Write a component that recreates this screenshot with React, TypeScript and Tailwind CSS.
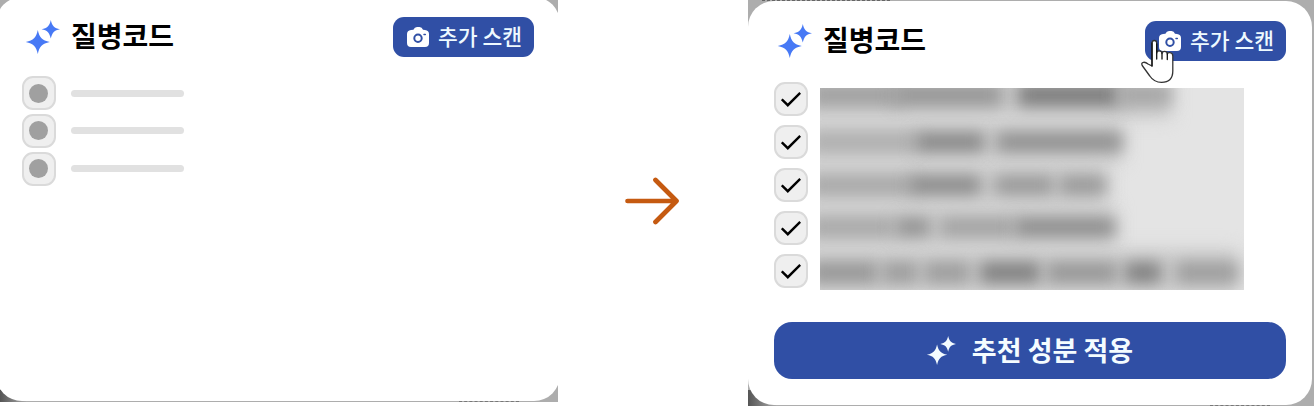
import clsx from 'clsx';

const FONT = 'font-["Noto_Sans_CJK_KR",sans-serif]';

type Smudge = { x: number; w: number; tone: string };

// Blurred text rows: each entry is a word, x and w in pixels
const ROWS: { y: number; h: number; words: Smudge[] }[] = [
  {
    y: -4,
    h: 22,
    words: [
      { x: -10, w: 90, tone: '#a0a0a0' },
      { x: 74, w: 108, tone: '#969696' },
      { x: 198, w: 102, tone: '#7c7c7c' },
      { x: 298, w: 53, tone: '#a6a6a6' },
    ],
  },
  {
    y: 45,
    h: 18,
    words: [
      { x: -10, w: 108, tone: '#adadad' },
      { x: 96, w: 68, tone: '#848484' },
      { x: 177, w: 125, tone: '#8c8c8c' },
    ],
  },
  {
    y: 88,
    h: 18,
    words: [
      { x: -10, w: 104, tone: '#a6a6a6' },
      { x: 90, w: 70, tone: '#888' },
      { x: 175, w: 58, tone: '#969696' },
      { x: 240, w: 46, tone: '#969696' },
    ],
  },
  {
    y: 130,
    h: 18,
    words: [
      { x: -10, w: 84, tone: '#a6a6a6' },
      { x: 76, w: 34, tone: '#909090' },
      { x: 120, w: 74, tone: '#a0a0a0' },
      { x: 195, w: 100, tone: '#8a8a8a' },
    ],
  },
  {
    y: 174,
    h: 21,
    words: [
      { x: -10, w: 68, tone: '#969696' },
      { x: 62, w: 36, tone: '#9c9c9c' },
      { x: 104, w: 46, tone: '#9c9c9c' },
      { x: 160, w: 60, tone: '#808080' },
      { x: 227, w: 70, tone: '#969696' },
      { x: 305, w: 36, tone: '#808080' },
      { x: 356, w: 62, tone: '#9c9c9c' },
    ],
  },
];

function Sparkles({ className }: { className: string }) {
  return (
    <svg viewBox="0 0 34 34" className={className} fill="currentColor">
      <path d="M11.8 10C13.6 17.8 16 20.3 23.8 22C16 23.7 13.6 26.2 11.8 34C10 26.2 7.6 23.7 -0.2 22C7.6 20.3 10 17.8 11.8 10Z" />
      <path d="M24.8 0C26.2 6.2 28.3 8.1 34 9.3C28.3 10.5 26.2 12.4 24.8 18.6C23.4 12.4 21.3 10.5 15.6 9.3C21.3 8.1 23.4 6.2 24.8 0Z" />
    </svg>
  );
}

function Camera() {
  return (
    <svg viewBox="0 0 22 20" className="w-[22px] h-5">
      <path
        fill="#fff"
        d="M6.4 2.8Q7.6 0 10 0H12.5Q15 0 16 2.8L18 3Q22 3.4 22 7V16Q22 20 18 20H4Q0 20 0 16V7Q0 3.4 4 3Z"
      />
      <circle cx="11" cy="11.2" r="3.7" fill="none" stroke="#304fa5" strokeWidth="2" />
      <path d="M17 7.5H18.3" stroke="#304fa5" strokeWidth="1.5" strokeLinecap="round" />
    </svg>
  );
}

function Pointer() {
  return (
    <svg
      viewBox="0 0 34 44"
      className="absolute left-[-4px] top-[18px] w-[34px] h-11"
      fill="#fff"
      stroke="#333"
      strokeWidth="1.3"
      strokeLinejoin="round"
      strokeLinecap="round">
      <path d="M11 27V4Q11 1.5 13.3 1.5Q15.7 1.5 15.7 4V14Q15.7 11.8 18 11.8Q21 11.8 21 14.5Q21 12.3 23.5 12.3Q26.3 12.3 26.3 15Q26.6 13.3 29 13.6Q31.8 14 31.8 17V32Q31.8 43.3 20.5 43.3Q13 43.3 8.8 37L1.2 26.5Q0 23.8 2.5 23.3Q4.7 23 7 25Z" />
      <path stroke="#111" d="M11 27V4M15.7 5V20M21 14.5V20M26.3 15V20.5" />
    </svg>
  );
}

function Header({ hovered = false }: { hovered?: boolean }) {
  return (
    <header className="flex items-start justify-between">
      <div className="flex items-start">
        <Sparkles className="w-[34px] h-[34px] ml-1 mt-[3px] text-[#4779f5] overflow-visible" />
        <h2 className="ml-[11px] text-[28px] leading-9 font-bold text-black whitespace-nowrap">
          질병코드
        </h2>
      </div>
      <button
        type="button"
        className="relative flex items-center w-[141px] h-10 pl-[14px] rounded-[11px] bg-[#304fa5] text-[#eefaff]">
        <Camera />
        <span className="ml-[9px] -mt-[3px] text-[21.5px] leading-10 font-medium whitespace-nowrap">
          추가 스캔
        </span>
        {hovered && <Pointer />}
      </button>
    </header>
  );
}

function Box({ checked = false }: { checked?: boolean }) {
  return (
    <div className="flex items-center justify-center shrink-0 w-[34px] h-[34px] rounded-[11px] border-2 border-[#dadada] bg-[#efefef]">
      {checked ? (
        <svg viewBox="0 0 20 15" className="w-5 h-[15px]" fill="none" stroke="#000" strokeWidth="2.4">
          <path d="M0.8 7.3L6.8 13.2L19.2 0.9" />
        </svg>
      ) : (
        <div className="w-[19px] h-[19px] -ml-px rounded-full bg-[#a0a0a0]" />
      )}
    </div>
  );
}

function EmptyPanel() {
  return (
    <section className="relative w-[558px] h-[402px] shrink-0 overflow-hidden bg-[#adadad]">
      <div className="absolute left-0 bottom-0 w-[26px] h-3 bg-linear-to-r from-[#555] to-[#aaa]" />
      <div className="relative w-[564px] h-[404px] -mt-[3px] -ml-1 pt-5 px-[26px] rounded-[26px] bg-white">
        <Header />
        <ul className="mt-[19px] flex flex-col gap-[3.8px]">
          {[0, 1, 2].map((row) => (
            <li key={row} className="flex items-center gap-[15px]">
              <Box />
              <div className="w-[113px] h-[7px] rounded-full bg-[#e1e1e1]" />
            </li>
          ))}
        </ul>
      </div>
      <div className="absolute left-[459px] bottom-0 w-[60px] border-b border-dashed border-[#777]" />
    </section>
  );
}

function ResultPanel() {
  return (
    <section className="relative w-[566px] h-[406px] shrink-0 overflow-hidden bg-[#adadad]">
      <div className="absolute left-[14px] top-0 w-[128px] border-t border-dashed border-[#666]" />
      <div className="absolute left-0 bottom-0 w-[28px] h-4 bg-linear-to-r from-[#555] to-[#aaa]" />
      <div className="relative w-[564px] h-[404px] mt-px pt-5 px-[26px] rounded-[26px] bg-white">
        <Header hovered />
        <div className="flex mt-[21px]">
          <ul className="flex flex-col gap-[9px]">
            {[0, 1, 2, 3, 4].map((row) => (
              <li key={row}>
                <Box checked />
              </li>
            ))}
          </ul>
          <div className="relative w-[424px] h-[202px] ml-3 mt-[6px] overflow-hidden bg-[#e4e4e4]">
            {ROWS.map((row) => {
              const last = row.words[row.words.length - 1];
              return (
                <div
                  key={row.y}
                  className="absolute bg-[#cbcbcb] blur-[9px]"
                  style={{ left: -20, top: row.y - 12, width: last.x + last.w + 20, height: row.h + 24 }}
                />
              );
            })}
            {ROWS.map((row) =>
              row.words.map((word) => (
                <div
                  key={`${row.y}-${word.x}`}
                  className="absolute blur-[8px]"
                  style={{
                    left: word.x,
                    top: row.y,
                    width: word.w,
                    height: row.h,
                    background: word.tone,
                  }}
                />
              )),
            )}
          </div>
        </div>
        <button
          type="button"
          className="flex items-center justify-center w-full h-[57px] mt-8 rounded-[18px] bg-[#304fa5] text-[#f4fcff]">
          <Sparkles className="w-[29px] h-[29px] -mt-px overflow-visible" />
          <span className="ml-4 -mt-[3px] text-[27px] leading-[57px] font-bold whitespace-nowrap">
            추천 성분 적용
          </span>
        </button>
      </div>
      <div className="absolute left-[462px] bottom-0 w-[60px] border-b border-dashed border-[#777]" />
    </section>
  );
}

export default function App() {
  return (
    <main className={clsx('flex w-[1314px] h-[406px] overflow-hidden bg-white', FONT)}>
      <EmptyPanel />
      <div className="flex items-center justify-center w-[190px] shrink-0">
        <svg
          viewBox="0 0 54 48"
          className="w-[54px] h-12 -mt-1 -ml-[3px]"
          fill="none"
          stroke="#c55a11"
          strokeWidth="4.7"
          strokeLinecap="round"
          strokeLinejoin="round">
          <path d="M2.5 24H51M30.5 3L51.5 24L30.5 45" />
        </svg>
      </div>
      <ResultPanel />
    </main>
  );
}
